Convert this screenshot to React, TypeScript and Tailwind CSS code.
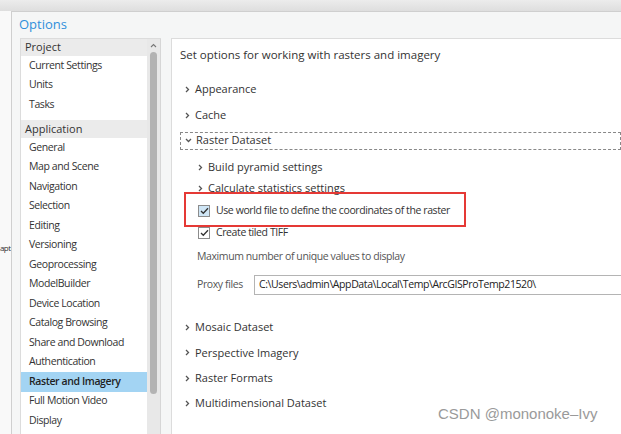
import React from "react";

const F = { fontFamily: '"Open Sans", "Noto Sans", sans-serif' };

function Chevron({ down = false }: { down?: boolean }) {
  return (
    <svg width="7" height="7" viewBox="0 0 7 7" className="shrink-0">
      {down ? (
        <polyline points="1,2 3.5,4.5 6,2" fill="none" stroke="#555" strokeWidth="1.3" />
      ) : (
        <polyline points="2,1 4.5,3.5 2,6" fill="none" stroke="#555" strokeWidth="1.3" />
      )}
    </svg>
  );
}

function Check({ blue = false }: { blue?: boolean }) {
  return (
    <div
      className={`w-[12px] h-[12px] border border-[#8c8c8c] flex items-center justify-center shrink-0 ${
        blue ? "bg-[#cfe6f6]" : "bg-white"
      }`}
    >
      <svg width="9" height="8" viewBox="0 0 9 8">
        <polyline points="1,4 3.3,6.3 8,1.3" fill="none" stroke="#333" strokeWidth="1.3" />
      </svg>
    </div>
  );
}

const projectItems = ["Current Settings", "Units", "Tasks"];
const appItems = [
  "General",
  "Map and Scene",
  "Navigation",
  "Selection",
  "Editing",
  "Versioning",
  "Geoprocessing",
  "ModelBuilder",
  "Device Location",
  "Catalog Browsing",
  "Share and Download",
  "Authentication",
  "Raster and Imagery",
  "Full Motion Video",
  "Display",
];

function Item({ label }: { label: string }) {
  const sel = label === "Raster and Imagery";
  return (
    <div
      className={`h-[19.5px] flex items-center pl-[8px] text-[10.5px] tracking-[-0.4px] ${
        sel ? "bg-[#a3d4f3] font-semibold text-[#1f1f1f]" : "text-[#333]"
      }`}
    >
      {label}
    </div>
  );
}

function Expander({ label, indent = false, down = false }: { label: string; indent?: boolean; down?: boolean }) {
  return (
    <div className={`flex items-center gap-[4px] text-[11px] text-[#333] ${indent ? "pl-[17px]" : "pl-[4px]"}`}>
      <Chevron down={down} />
      <span>{label}</span>
    </div>
  );
}

export default function App() {
  return (
    <div className="w-[621px] h-[434px] relative overflow-hidden bg-[#f7f7f7] flex flex-col" style={F}>
      <div className="h-[11px] shrink-0 bg-gradient-to-b from-[#ececec] to-[#dedede]" />
      <div className="flex-1 flex min-h-0">
        <div className="w-[11px] shrink-0 bg-[#f9f9f9]">
          <div className="mt-[231px] text-[8px] text-[#333] tracking-[-0.6px] whitespace-nowrap">apt</div>
        </div>
        <div className="flex-1 flex flex-col min-w-0 bg-[#f5f6f6] border-l border-t border-[#cfcfcf]">
          <div className="h-[26px] shrink-0 flex items-center pl-[7px] text-[13px] text-[#2f8fdb]">Options</div>
          <div className="flex-1 flex min-h-0">
            {/* Sidebar */}
            <div className="ml-[8px] w-[141px] shrink-0 flex border-t border-l border-[#dcdcdc]">
              <div className="w-[126px] bg-white flex flex-col">
                <div className="h-[17px] bg-[#ebebeb] flex items-center pl-[4px] text-[11px] text-[#333]">Project</div>
                {projectItems.map((l) => (
                  <Item key={l} label={l} />
                ))}
                <div className="h-[5.5px]" />
                <div className="h-[18px] bg-[#ebebeb] flex items-center pl-[4px] text-[11px] text-[#333]">
                  Application
                </div>
                {appItems.map((l) => (
                  <Item key={l} label={l} />
                ))}
              </div>
              <div className="w-[14px] bg-[#e8e8e8] flex flex-col items-center border-r border-[#d6d6d6]">
                <svg width="7" height="5" viewBox="0 0 7 5" className="mt-[4px]">
                  <polyline points="1,4 3.5,1.5 6,4" fill="none" stroke="#777" strokeWidth="1.1" />
                </svg>
                <div className="mt-[4px] w-[7px] h-[342px] rounded-full bg-[#b3b3b3]" />
              </div>
            </div>
            {/* Main panel */}
            <div className="ml-[10px] flex-1 bg-white border-t border-l border-[#dcdcdc] relative min-w-0">
              <div className="pt-[7px] pl-[8px] h-[25px] flex items-center text-[11.5px] text-[#333]">
                Set options for working with rasters and imagery
              </div>
              <div className="mt-[12px] pl-[8px] flex flex-col">
                <div className="h-[26px] flex items-center">
                  <Expander label="Appearance" />
                </div>
                <div className="h-[26px] flex items-center">
                  <Expander label="Cache" />
                </div>
                <div className="h-[25px] flex items-center">
                  <div className="w-full h-[18px] flex items-center border border-dashed border-[#888]">
                    <Expander label="Raster Dataset" down />
                  </div>
                </div>
                <div className="h-[4px]" />
                <div className="h-[21px] flex items-center">
                  <Expander label="Build pyramid settings" indent />
                </div>
                <div className="h-[21px] flex items-center">
                  <Expander label="Calculate statistics settings" indent />
                </div>
                <div className="h-[23px] flex items-center gap-[6px] pl-[18px] text-[10.5px] tracking-[-0.4px] text-[#333]">
                  <Check blue />
                  <span>Use world file to define the coordinates of the raster</span>
                </div>
                <div className="h-[22px] flex items-center gap-[6px] pl-[18px] text-[10.5px] tracking-[-0.4px] text-[#333]">
                  <Check />
                  <span>Create tiled TIFF</span>
                </div>
                <div className="h-[26px] flex items-center pl-[17px] text-[10.5px] tracking-[-0.4px] text-[#555]">
                  Maximum number of unique values to display
                </div>
                <div className="h-[30px] flex items-center pl-[17px] text-[10.5px] tracking-[-0.4px] text-[#555]">
                  <span className="w-[57px] shrink-0">Proxy files</span>
                  <div className="flex-1 h-[20px] border border-[#b4b4b4] border-r-0 flex items-center pl-[4px] text-[#222] whitespace-nowrap overflow-hidden">
                    C:\Users\admin\AppData\Local\Temp\ArcGISProTemp21520\
                  </div>
                </div>
                <div className="h-[15px]" />
                <div className="h-[25.3px] flex items-center">
                  <Expander label="Mosaic Dataset" />
                </div>
                <div className="h-[25.3px] flex items-center">
                  <Expander label="Perspective Imagery" />
                </div>
                <div className="h-[25.3px] flex items-center">
                  <Expander label="Raster Formats" />
                </div>
                <div className="h-[25.3px] flex items-center">
                  <Expander label="Multidimensional Dataset" />
                </div>
              </div>
              <div className="absolute left-[12px] top-[153px] w-[282px] h-[35px] border-2 border-[#e53935]" />
            </div>
          </div>
        </div>
      </div>
      <div
        className="absolute left-[438px] top-[403px] text-[15px] text-[#9a9a9a] whitespace-nowrap"
        style={{ fontFamily: '"Liberation Sans", Arial, sans-serif' }}
      >
        CSDN @mononoke–Ivy
      </div>
    </div>
  );
}
